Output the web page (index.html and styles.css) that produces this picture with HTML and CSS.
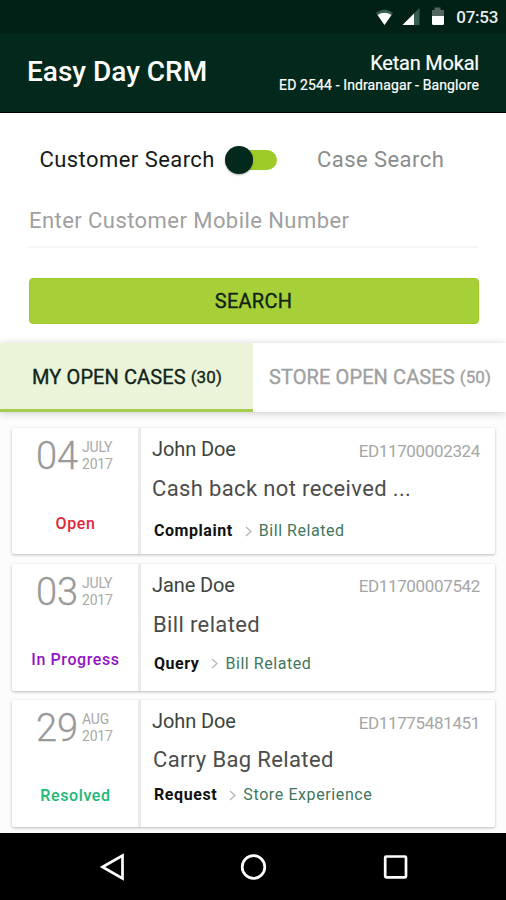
FILE: index.html
```html
<!DOCTYPE html>
<html lang="en">
<head>
<meta charset="utf-8">
<title>Easy Day CRM</title>
<link rel="stylesheet" href="styles.css">
</head>
<body>
<div class="status-bar">
  <svg class="status-icons" width="74" height="24" viewBox="0 0 74 24">
    <path d="M0 7Q8.500 0 17 7L8.500 19Z" fill="#355f50"/>
    <path d="M1.500 9Q8.500 4.500 15.500 9L8.500 19Z" fill="#fff"/>
    <path d="M43.500 2V19H26.500Z" fill="#355f50"/>
    <path d="M38 7.500V19H26.500Z" fill="#fff"/>
    <path d="M58.500 1.500H64.500V4H68V11H56V4H58.500Z" fill="#51675f"/>
    <path d="M56 10H68V17.500Q68 19 66.500 19H57.500Q56 19 56 17.500Z" fill="#fff"/>
  </svg>
  <span class="clock">07:53</span>
</div>
<header class="app-header">
  <h1 class="app-title">Easy Day CRM</h1>
  <div class="user">
    <div class="user-name">Ketan Mokal</div>
    <div class="user-store">ED 2544 - Indranagar - Banglore</div>
  </div>
</header>
<section class="search">
  <div class="mode">
    <span class="mode-customer">Customer Search</span>
    <span class="toggle"><span class="knob"></span></span>
    <span class="mode-case">Case Search</span>
  </div>
  <div class="field"><span>Enter Customer Mobile Number</span></div>
  <button class="search-button">SEARCH</button>
</section>
<nav class="tabs">
  <div class="tab tab-active"><span class="tab-label">MY OPEN CASES</span><span class="count">(30)</span></div>
  <div class="tab"><span class="tab-label">STORE OPEN CASES</span><span class="count">(50)</span></div>
</nav>
<main class="cases">
  <article class="case">
    <div class="side">
      <div class="date"><span class="day">04</span><span class="month"><span>JULY</span><span class="year">2017</span></span></div>
      <div class="state open">Open</div>
    </div>
    <div class="detail">
      <div class="top"><span class="name">John Doe</span><span class="case-id">ED11700002324</span></div>
      <div class="subject subject-cash">Cash back not received ...</div>
      <div class="kind kind-low"><b class="complaint">Complaint</b><svg class="chevron" width="7" height="11" viewBox="0 0 7 11"><path d="M1 1L6 5.500L1 10"/></svg><span class="topic">Bill Related</span></div>
    </div>
  </article>
  <article class="case">
    <div class="side">
      <div class="date"><span class="day">03</span><span class="month"><span>JULY</span><span class="year">2017</span></span></div>
      <div class="state progress">In Progress</div>
    </div>
    <div class="detail">
      <div class="top"><span class="name">Jane Doe</span><span class="case-id">ED11700007542</span></div>
      <div class="subject subject-bill">Bill related</div>
      <div class="kind"><b class="query">Query</b><svg class="chevron" width="7" height="11" viewBox="0 0 7 11"><path d="M1 1L6 5.500L1 10"/></svg><span class="topic">Bill Related</span></div>
    </div>
  </article>
  <article class="case">
    <div class="side">
      <div class="date"><span class="day">29</span><span class="month"><span class="aug">AUG</span><span class="year">2017</span></span></div>
      <div class="state resolved">Resolved</div>
    </div>
    <div class="detail">
      <div class="top"><span class="name">John Doe</span><span class="case-id">ED11775481451</span></div>
      <div class="subject subject-bag">Carry Bag Related</div>
      <div class="kind kind-high"><b class="request">Request</b><svg class="chevron" width="7" height="11" viewBox="0 0 7 11"><path d="M1 1L6 5.500L1 10"/></svg><span class="topic topic-store">Store Experience</span></div>
    </div>
  </article>
</main>
<footer class="nav-bar">
  <svg width="26" height="28" viewBox="0 0 26 28"><path d="M3.500 14L23.500 2.500V25.500Z"/></svg>
  <svg width="28" height="28" viewBox="0 0 28 28"><circle cx="13.500" cy="14" r="11.300"/></svg>
  <svg width="26" height="28" viewBox="0 0 26 28"><rect x="2.200" y="3.500" width="20.800" height="20.800" rx="1"/></svg>
</footer>
</body>
</html>
```

FILE: styles.css
```css
* { box-sizing: border-box; }
body {
  margin: 0;
  width: 506px;
  height: 900px;
  overflow: hidden;
  display: flex;
  flex-direction: column;
  background: #fcfcfc;
  font-family: Roboto, sans-serif;
  white-space: nowrap;
}
.status-bar {
  height: 34px;
  background: #012016;
  color: #e8eeeb;
  display: flex;
  justify-content: flex-end;
  align-items: center;
  padding-right: 8px;
  gap: 6px;
}
.status-icons { margin-top: 1px; }
.clock { font-size: 17px; font-weight: 500; line-height: 20px; letter-spacing: -0.3px; }
.app-header {
  height: 79px;
  background: #02291b;
  border-bottom: 1px solid #000;
  display: flex;
  justify-content: space-between;
  align-items: flex-start;
  padding: 0 27px;
  color: #fff;
}
.app-title { margin: 21px 0 0; font-size: 28px; font-weight: 500; line-height: 34px; }
.user { text-align: right; padding-top: 17px; }
.user-name { font-size: 20px; line-height: 24px; letter-spacing: -0.2px; -webkit-text-stroke: 0.2px #fff; }
.user-store { font-size: 14px; line-height: 18px; margin-top: 1px; letter-spacing: 0.12px; -webkit-text-stroke: 0.2px #fff; }
.search { height: 230px; background: #fff; padding: 0 28px; }
.mode { height: 93px; display: flex; align-items: center; padding-left: 11.5px; font-size: 22px; letter-spacing: 0.44px; }
.mode-customer { width: 185.5px; color: #151a18; }
.mode-case { color: #8a8d8c; margin-left: 40px; }
.toggle { width: 52px; height: 20px; border-radius: 10px; background: linear-gradient(90deg, transparent 14px, #9fcb28 14px); display: flex; align-items: center; }
.knob { width: 28px; height: 28px; border-radius: 50%; background: #02291b; box-shadow: 0 1px 2px #0005; }
.field { width: 450px; height: 42px; padding: 1px 0 0 1px; border-bottom: 2px solid #f6f6f6; color: #a0a0a0; font-size: 22px; line-height: 28px; letter-spacing: 0.44px; }
.search-button {
  display: block;
  width: 450px;
  height: 46px;
  margin: 30px 0 0 0.5px;
  padding: 0;
  border: 1px solid #9cc923;
  border-radius: 4px;
  background: #a6cf38;
  color: #0e2513;
  font: 400 20px/44px Roboto, sans-serif;
  letter-spacing: 0.25px;
  -webkit-text-stroke: 0.35px #0e2513;
}
.tabs { height: 69px; display: flex; background: #fff; box-shadow: 0 1px 8px #0003; }
.tab { flex: 1; display: flex; justify-content: center; align-items: center; color: #a0a0a0; font-size: 20px; letter-spacing: 0.1px; gap: 5px; padding: 0 0 2px 1px; -webkit-text-stroke: 0.35px currentColor; }
.tab-active { background: #ebf4d8; color: #10251b; box-shadow: inset 0 -3px #a4cd51; }
.count { font-size: 17px; padding-top: 1px; }
.cases { height: 421px; display: grid; grid-template-rows: 126px 127px 127px; gap: 9.5px; padding: 16px 11px 0 12px; }
.case { display: flex; background: #fff; border-radius: 2px; box-shadow: 0 1px 3px #0004; }
.side { width: 129px; border-right: 3px solid #ebebeb; display: flex; flex-direction: column; align-items: center; justify-content: space-between; padding: 6px 0 20.5px; }
.date { width: 79px; display: flex; color: #999; gap: 3px; align-self: flex-start; margin-left: 24px; }
.day { width: 42px; font-size: 38px; font-weight: 300; line-height: 44px; -webkit-text-stroke: 0.3px #999; }
.month { display: flex; flex-direction: column; font-size: 14px; font-weight: 400; line-height: 17px; padding: 5px 0 0 1px; letter-spacing: -0.2px; color: #aaa; }
.state { font-size: 16px; font-weight: 500; line-height: 20px; letter-spacing: 0.6px; padding-left: 1px; }
.open { color: #e32639; }
.progress { color: #9214c4; }
.resolved { color: #20b874; margin-bottom: 1px; }
.detail { flex: 1; padding: 9px 15px 0 11px; }
.top { display: flex; justify-content: space-between; align-items: center; height: 24px; }
.name { font-size: 20px; color: #3d4341; letter-spacing: -0.1px; }
.case-id { font-size: 17px; color: #a6a6a6; padding-top: 3px; letter-spacing: -0.35px; }
.subject { font-size: 22px; line-height: 28px; margin-top: 14px; color: #4c4c4c; letter-spacing: 0.36px; }
.subject-bill { padding-left: 1px; }
.subject-bag { padding-left: 1px; margin-top: 13px; }
.kind { display: flex; align-items: center; font-size: 16px; line-height: 20px; margin-top: 15px; padding-left: 2px; letter-spacing: 0.55px; }
.kind-low { margin-top: 18px; }
.kind-high { margin-top: 11px; letter-spacing: 0.6px; }
.kind b { color: #111; }
.chevron { fill: none; stroke: #b4b4b4; stroke-width: 1.2; margin: 0 7px 0 12px; }
.topic { color: #3f765e; }
.nav-bar { height: 67px; background: #000; display: flex; justify-content: space-between; align-items: center; padding: 0 97px 0 99px; }
.nav-bar svg { fill: none; stroke: #fff; stroke-width: 2.7; }
```
